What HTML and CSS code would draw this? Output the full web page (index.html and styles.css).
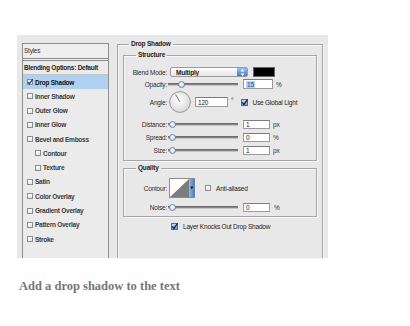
FILE: index.html
```html
<!DOCTYPE html>
<html lang="en">
<head>
    <meta charset="UTF-8">
    <title>Layer Style - Drop Shadow</title>
    <link rel="stylesheet" href="styles.css">
</head>
<body>
    <div class="page">
        <div class="panel">
            <!-- Styles list -->
            <div class="styles">
                <div class="styles-head">Styles</div>
                <div class="styles-blend">Blending Options: Default</div>
                <div class="styles-row active">
                    <span class="cb">
                        <svg width="6" height="6" viewBox="0 0 6 6"><path d="M0.8 3 L2.4 4.8 L6 0" fill="none" stroke="#1d3f8a" stroke-width="1.3"/></svg>
                    </span>Drop Shadow
                </div>
                <div class="styles-row"><span class="cb"></span>Inner Shadow</div>
                <div class="styles-row"><span class="cb"></span>Outer Glow</div>
                <div class="styles-row"><span class="cb"></span>Inner Glow</div>
                <div class="styles-row"><span class="cb"></span>Bevel and Emboss</div>
                <div class="styles-row sub"><span class="cb"></span>Contour</div>
                <div class="styles-row sub"><span class="cb"></span>Texture</div>
                <div class="styles-row"><span class="cb"></span>Satin</div>
                <div class="styles-row"><span class="cb"></span>Color Overlay</div>
                <div class="styles-row"><span class="cb"></span>Gradient Overlay</div>
                <div class="styles-row"><span class="cb"></span>Pattern Overlay</div>
                <div class="styles-row"><span class="cb"></span>Stroke</div>
            </div>

            <!-- Options -->
            <div class="options">
                <fieldset class="group outer">
                    <legend>Drop Shadow</legend>

                    <fieldset class="group structure">
                        <legend>Structure</legend>
                        <div class="row">
                            <span class="label">Blend Mode:</span>
                            <div class="select">
                                <span class="select-text">Multiply</span>
                                <span class="select-btn">
                                    <svg width="9" height="9" viewBox="0 0 9 9"><path d="M4.5 1 L6.5 3.5 L2.5 3.5 Z M4.5 8 L6.5 5.5 L2.5 5.5 Z" fill="#fff"/></svg>
                                </span>
                            </div>
                            <span class="swatch"></span>
                        </div>
                        <div class="row">
                            <span class="label">Opacity:</span>
                            <div class="slider"><span class="knob" style="margin-left: 10px"></span></div>
                            <span class="field wide"><span class="sel">15</span></span>
                            <span class="unit">%</span>
                        </div>
                        <div class="row angle">
                            <span class="label">Angle:</span>
                            <svg class="dial" width="22" height="22" viewBox="0 0 22 22">
                                <defs>
                                    <radialGradient id="dg" cx="0.45" cy="0.4" r="0.6">
                                        <stop offset="0" stop-color="#ffffff"/>
                                        <stop offset="1" stop-color="#d9d9d9"/>
                                    </radialGradient>
                                </defs>
                                <circle cx="11" cy="11" r="10.4" fill="url(#dg)" stroke="#8e8e8e" stroke-width="0.9"/>
                                <line x1="11" y1="11" x2="6.6" y2="3.6" stroke="#555" stroke-width="0.8"/>
                            </svg>
                            <span class="field angle-field">120</span>
                            <span class="deg">°</span>
                            <span class="cb on global">
                                <svg width="7" height="7" viewBox="0 0 7 7"><path d="M1.2 3.4 L2.9 5.4 L6.6 0.4" fill="none" stroke="#1a2a4a" stroke-width="1.3"/></svg>
                            </span>
                            <span class="check-label">Use Global Light</span>
                        </div>
                        <div class="row tall">
                            <span class="label">Distance:</span>
                            <div class="slider"><span class="knob" style="margin-left: 1px"></span></div>
                            <span class="field">1</span>
                            <span class="unit">px</span>
                        </div>
                        <div class="row tall">
                            <span class="label">Spread:</span>
                            <div class="slider"><span class="knob" style="margin-left: 1px"></span></div>
                            <span class="field">0</span>
                            <span class="unit">%</span>
                        </div>
                        <div class="row tall">
                            <span class="label">Size:</span>
                            <div class="slider"><span class="knob" style="margin-left: 1px"></span></div>
                            <span class="field">1</span>
                            <span class="unit">px</span>
                        </div>
                    </fieldset>

                    <fieldset class="group quality">
                        <legend>Quality</legend>
                        <div class="row contour-row">
                            <span class="label">Contour:</span>
                            <svg class="contour" width="26" height="20" viewBox="0 0 26 20">
                                <defs>
                                    <linearGradient id="cg" x1="0" y1="0" x2="1" y2="0">
                                        <stop offset="0" stop-color="#8fb9e6"/>
                                        <stop offset="1" stop-color="#3f7fc7"/>
                                    </linearGradient>
                                </defs>
                                <rect x="0.5" y="0.5" width="25" height="19" fill="#fff" stroke="#8c8c8c"/>
                                <polygon points="1,19 20,1 20,19" fill="#7d7d7d"/>
                                <rect x="20" y="1" width="5.5" height="18" fill="url(#cg)"/>
                                <path d="M21.3 8.5 L24.2 8.5 L22.75 11.5 Z" fill="#111"/>
                            </svg>
                            <span class="cb anti"></span>
                            <span class="check-label">Anti-aliased</span>
                        </div>
                        <div class="row noise">
                            <span class="label">Noise:</span>
                            <div class="slider"><span class="knob" style="margin-left: 1px"></span></div>
                            <span class="field">0</span>
                            <span class="unit pct">%</span>
                        </div>
                    </fieldset>

                    <div class="knock">
                        <span class="cb on">
                            <svg width="7" height="7" viewBox="0 0 7 7"><path d="M1.2 3.4 L2.9 5.4 L6.6 0.4" fill="none" stroke="#1a2a4a" stroke-width="1.3"/></svg>
                        </span>
                        <span class="check-label">Layer Knocks Out Drop Shadow</span>
                    </div>
                </fieldset>
            </div>
        </div>

        <p class="caption">Add a drop shadow to the text</p>
    </div>
</body>
</html>
```

FILE: styles.css
```css
body {
    margin: 0;
    background-color: #fff;
    font-family: "Liberation Sans", Arial, sans-serif;
    color: #222;
}
.page {
    padding: 35px 0 0 17px;
}
.panel {
    display: flex;
    width: 311px;
    height: 223px;
    background-color: #e8e8e8;
    box-sizing: border-box;
    padding-right: 5px;
}

/* Styles list */
.styles {
    width: 87px;
    margin: 8px 0 0 5px;
    border: 1px solid #8e8e8e;
    border-bottom: none;
    box-sizing: border-box;
    background-color: #ebebeb;
    font-size: 6.5px;
    letter-spacing: -0.25px;
    white-space: nowrap;
}
.styles-head {
    height: 14px;
    line-height: 14px;
    padding-left: 1px;
    border-bottom: 3px double #8a8a8a;
    background-color: #efefef;
    color: #333;
}
.styles-blend {
    height: 13px;
    line-height: 13px;
    padding-left: 1px;
    font-weight: bold;
    border-bottom: 1px solid #c4c4c4;
}
.styles-row {
    display: flex;
    align-items: center;
    height: 14.27px;
    padding-left: 4px;
    font-weight: bold;
    color: #3a3a3a;
}
.styles-row.sub {
    padding-left: 12px;
}
.styles-row.active {
    background-color: #afd1f1;
    color: #111;
}
.styles-row .cb {
    margin-right: 2px;
}

/* Checkboxes */
.cb {
    display: inline-flex;
    align-items: center;
    justify-content: center;
    width: 6px;
    height: 6px;
    border: 1px solid #8c8c8c;
    box-sizing: border-box;
    background: linear-gradient(#ffffff, #e4e4e4);
    overflow: visible;
    flex-shrink: 0;
}
.cb svg {
    flex-shrink: 0;
}
.cb.on {
    width: 7px;
    height: 7px;
    border-color: #4a6d99;
    background: linear-gradient(#c6def6, #5e98d6);
}

/* Options groups */
.options {
    flex: 1;
    margin-left: 8px;
    display: flex;
    flex-direction: column;
}
.group {
    margin: 0;
    padding: 0;
    min-width: 0;
    border: 1px solid #a6a6a6;
    box-shadow: inset 1px 1px 0 #f7f7f7, 1px 1px 0 #f7f7f7;
}
.group legend {
    font-size: 6.5px;
    letter-spacing: -0.2px;
    line-height: 8px;
    font-weight: bold;
    padding: 0 2px;
    color: #222;
}
.outer {
    margin-top: 5px;
    flex: 1;
    padding: 3px 5px 0;
    border-bottom: none;
}
.outer > legend {
    margin-left: 6px;
}
.structure {
    padding: 7px 0 3px;
}
.structure > legend,
.quality > legend {
    margin-left: 12px;
}
.quality {
    margin-top: 3px;
    padding: 6px 0 3px;
}

/* Rows */
.row {
    display: flex;
    align-items: center;
    height: 12px;
    font-size: 6.5px;
    letter-spacing: -0.2px;
    white-space: nowrap;
}
.row.angle {
    height: 22px;
    margin-top: 1px;
}
.row.tall {
    height: 13px;
}
.row.angle + .row.tall {
    margin-top: 5px;
}
.contour-row {
    height: 20px;
}
.row.noise {
    margin-top: 3px;
}
.label {
    width: 44px;
    text-align: right;
    padding-right: 1px;
    box-sizing: border-box;
    color: #2e2e2e;
}

.select {
    display: flex;
    align-items: center;
    width: 78px;
    height: 10px;
    margin-left: 2px;
    border: 1px solid #9a9a9a;
    border-radius: 2px;
    box-sizing: border-box;
    background: linear-gradient(#ffffff, #e6e6e6);
    overflow: hidden;
}
.select-text {
    flex: 1;
    padding-left: 5px;
    font-weight: bold;
    color: #222;
}
.select-btn {
    display: flex;
    align-items: center;
    justify-content: center;
    width: 10px;
    height: 100%;
    background: linear-gradient(#9cc3ec, #3c7cc6);
}
.swatch {
    width: 22px;
    height: 10px;
    margin-left: 5px;
    background-color: #000;
    border: 1px solid #666;
    box-sizing: border-box;
}

.slider {
    display: flex;
    align-items: center;
    width: 70px;
    height: 8px;
    background: linear-gradient(#5f5f5f, #a2a2a2) center / 100% 2.5px no-repeat;
    border-radius: 2px;
}
.knob {
    width: 7px;
    height: 7px;
    border-radius: 50%;
    border: 1px solid #6f88a8;
    box-sizing: border-box;
    background: radial-gradient(circle at 45% 40%, #ffffff, #b7cbe0);
}

.field {
    display: flex;
    align-items: center;
    width: 27px;
    height: 9px;
    margin-left: 5px;
    padding-left: 2px;
    border: 1px solid #9b9b9b;
    border-top-color: #7c7c7c;
    box-sizing: border-box;
    background-color: #fff;
    color: #222;
}
.field.wide {
    width: 30px;
    height: 10px;
}
.sel {
    background-color: #b3d1f2;
    color: #1c4aa0;
    padding: 0 1px;
}
.angle-field {
    width: 33px;
    height: 10px;
    margin-left: 4px;
}
.deg {
    margin-left: 3px;
    margin-bottom: 3px;
}
.unit {
    margin-left: 3px;
    color: #333;
}
.unit.pct {
    margin-left: 4px;
}
.dial {
    margin-left: 1px;
}
.cb.global {
    margin-left: 8px;
}
.check-label {
    margin-left: 5px;
    color: #222;
}
.global + .check-label {
    margin-left: 4px;
}
.contour {
    margin-left: 1px;
}
.cb.anti {
    margin-left: 10px;
}

.knock {
    display: flex;
    align-items: center;
    height: 9px;
    margin: 5px 0 0 48px;
    font-size: 6.5px;
    letter-spacing: -0.2px;
    white-space: nowrap;
}

/* Caption */
.caption {
    margin: 21px 0 0 2px;
    font-family: "Liberation Serif", "DejaVu Serif", serif;
    font-size: 12.5px;
    line-height: 15px;
    font-weight: bold;
    color: #767676;
}
```
